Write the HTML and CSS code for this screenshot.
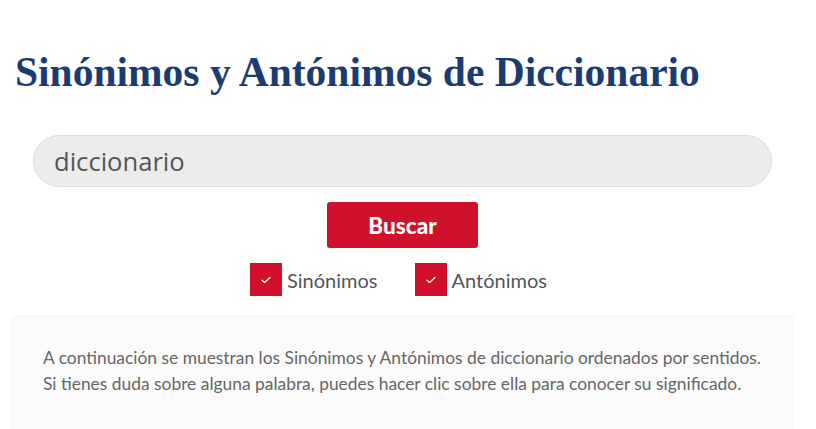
FILE: index.html
```html
<!DOCTYPE html>
<html lang="es">
  <head>
    <meta charset="UTF-8" />
    <meta name="viewport" content="width=device-width, initial-scale=1.0" />
    <title>Sinónimos y Antónimos de Diccionario</title>
    <link rel="stylesheet" href="styles.css">
  </head>
  <body>
    <div class="container">
      <h1 class="title">Sinónimos y Antónimos de Diccionario</h1>

      <form class="search" onsubmit="return false">
        <input type="text" class="search-input" value="diccionario" />
        <button type="submit" class="search-btn">Buscar</button>
        <div class="options">
          <label class="option">
            <span class="check">
              <svg width="12" height="10" viewBox="0 0 12 10"><path d="M2 5.2l2.6 2.4L10 2.4" fill="none" stroke="#fff" stroke-width="1.4" stroke-linecap="round" stroke-linejoin="round"/></svg>
            </span>
            Sinónimos
          </label>
          <label class="option">
            <span class="check">
              <svg width="12" height="10" viewBox="0 0 12 10"><path d="M2 5.2l2.6 2.4L10 2.4" fill="none" stroke="#fff" stroke-width="1.4" stroke-linecap="round" stroke-linejoin="round"/></svg>
            </span>
            Antónimos
          </label>
        </div>
      </form>

      <div class="info">
        <p>
          A continuación se muestran los Sinónimos y Antónimos de diccionario ordenados por sentidos.<br />
          Si tienes duda sobre alguna palabra, puedes hacer clic sobre ella para conocer su significado.
        </p>
      </div>
    </div>
  </body>
</html>
```

FILE: styles.css
```css
body {
  margin: 0;
  background: #fff;
  font-family: "Open Sans", Arial, sans-serif;
  color: #555;
}
.container {
  width: 779px;
  margin-left: 13px;
}
.title {
  font-family: "Liberation Serif", "Times New Roman", serif;
  font-weight: bold;
  font-size: 41.5px;
  color: #1b3c70;
  margin: 0;
  padding: 46px 0 0 2px;
  line-height: 52px;
}
.search {
  display: flex;
  flex-direction: column;
  align-items: center;
  margin-top: 37px;
}
.search-input {
  box-sizing: border-box;
  width: 739px;
  height: 52px;
  border: 1px solid #ddd;
  border-radius: 26px;
  background: #ececec;
  padding: 0 20px;
  font-family: "Open Sans", Arial, sans-serif;
  font-size: 25.6px;
  color: #555;
  outline: none;
}
.search-btn {
  margin-top: 15px;
  width: 151px;
  height: 46px;
  border: none;
  border-radius: 3px;
  background: #d0112b;
  color: #fff;
  font-family: "Lato", "Noto Sans", sans-serif;
  font-weight: 900;
  font-size: 22.5px;
  cursor: pointer;
}
.options {
  display: flex;
  gap: 37px;
  margin-top: 15px;
  margin-left: -8px;
}
.option {
  display: flex;
  align-items: center;
  gap: 5px;
  font-family: "Lato", "Noto Sans", sans-serif;
  font-size: 20px;
  color: #555;
}
.check {
  flex: none;
  width: 32px;
  height: 33px;
  background: #d0112b;
  display: flex;
  align-items: center;
  justify-content: center;
}
.info {
  margin-top: 21px;
  background: #fbfbfb;
  box-shadow: 0 0 4px rgba(0, 0, 0, 0.08);
  padding: 28px 30px 40px;
}
.info p {
  margin: 0;
  font-family: "Lato", "Noto Sans", sans-serif;
  font-size: 17.4px;
  line-height: 26px;
  color: #666;
}
```
